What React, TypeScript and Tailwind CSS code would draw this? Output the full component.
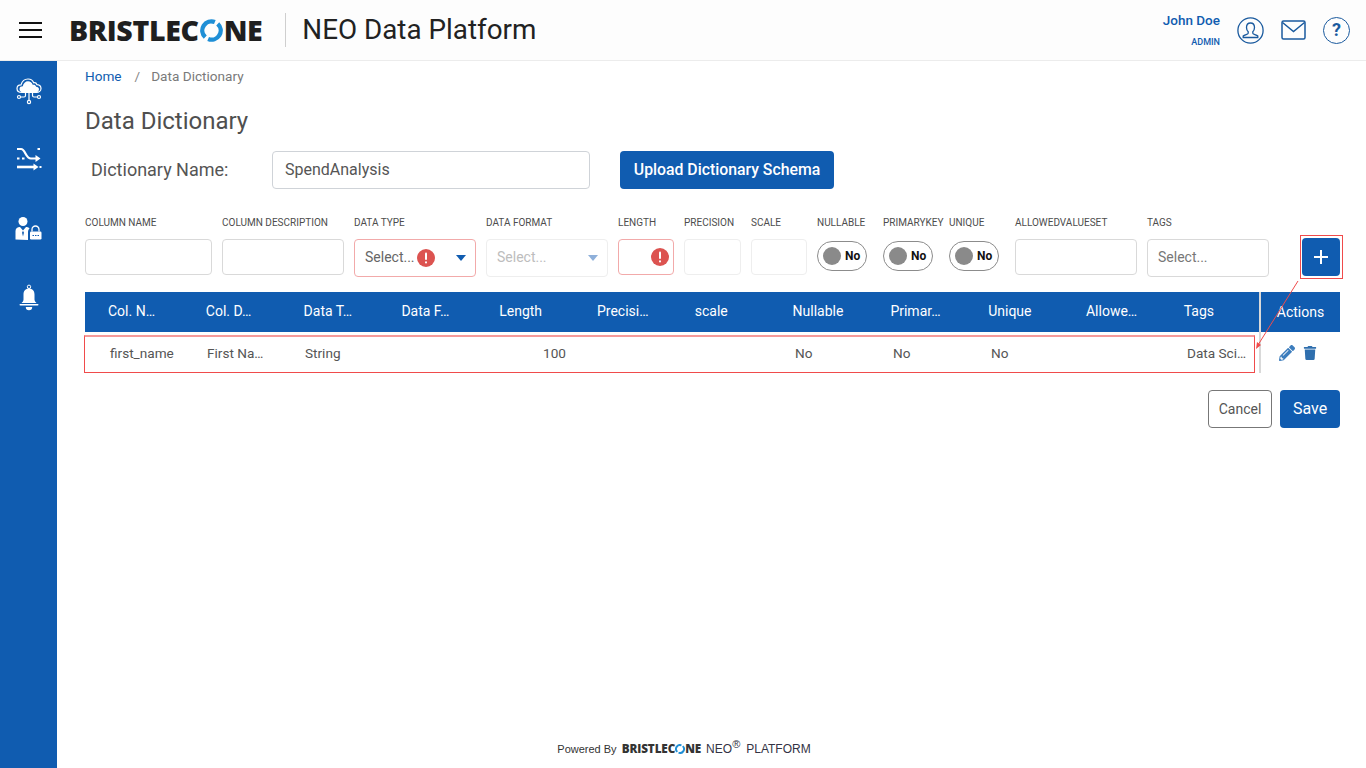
import { FaPencilAlt, FaTrash } from 'react-icons/fa';

const font = "font-['Roboto',sans-serif]";

const LogoRing = ({ size }: { size: number }) => (
  <svg width={size} height={size} viewBox="0 0 24 24" fill="none" className="shrink-0">
    <path d="M15.5 3.2A9.5 9.5 0 0 0 5.5 19" stroke="#1f8fd6" strokeWidth="4.6" />
    <path d="M8.5 20.8A9.5 9.5 0 0 0 18.5 5" stroke="#1f8fd6" strokeWidth="4.6" />
  </svg>
);

const Logo = () => (
  <div className="flex items-center font-['Open_Sans',sans-serif] font-extrabold text-[28.500px] leading-none text-[#1f1f1f] tracking-[-0.35px]">
    <span>BRISTLEC</span>
    <span className="mx-[1px]"><LogoRing size={23} /></span>
    <span>NE</span>
  </div>
);

const SmallLogo = () => (
  <div className="flex items-center font-['Open_Sans',sans-serif] font-extrabold text-[11.700px] leading-none text-[#333] tracking-[-0.1px]">
    <span>BRISTLEC</span>
    <LogoRing size={10} />
    <span>NE</span>
  </div>
);

const CloudIcon = () => (
  <svg width="28" height="28" viewBox="0 0 28 28" fill="none" stroke="white" strokeWidth="1.2" className="shrink-0">
    <path d="M7 15.5c-3 0-5-1.700-5-4s1.700-3.700 4-3.700C7 4.500 9.500 2 13 2c2.700 0 4.800 1.500 5.700 3.800 1-.3 2.600.1 3.300 1.900 2.300.2 4 1.800 4 3.900s-2 3.900-4.500 3.900z" />
    <path d="M8.500 15.500c-2.500 0-4-1.500-4-3.500s1.500-2.700 3.300-2.700c.5-3 2.700-5 5.200-5 2.300 0 4 1.500 4.700 3.500 1-.4 3-.2 3.500 2 1.500 0 2.800.9 2.800 2.500s-1.500 3.200-3 3.200z" fill="white" stroke="none" />
    <path d="M14 15v8M10.500 15v3.500a1.500 1.500 0 0 1-1.500 1.500H5.500M17.500 15v3.500a1.500 1.500 0 0 0 1.500 1.500h3.500" />
    <circle cx="14" cy="25" r="1.600" /><circle cx="4" cy="20" r="1.500" /><circle cx="24" cy="20" r="1.500" />
  </svg>
);

const FlowIcon = () => (
  <svg width="26" height="26" viewBox="0 0 26 26" fill="none" stroke="white" strokeWidth="2.200" className="shrink-0">
    <path d="M1 3h4c4.500 0 4.500 9.500 10 9.500h6" />
    <path d="M19.500 9l5 3.500-5 3.500z" fill="white" stroke="none" />
    <path d="M1 21h18" strokeWidth="2.600" />
    <path d="M17.500 17.500l5 3.500-5 3.500z" fill="white" stroke="none" />
    <path d="M1 12.500h2.500M6 12.500h2.500M21.500 3h2.500M23.500 21h2" />
  </svg>
);

const AdminIcon = () => (
  <svg width="28" height="26" viewBox="0 0 28 26" fill="white" className="shrink-0">
    <circle cx="8" cy="5.500" r="4.500" />
    <path d="M0.500 23.500v-8.500c0-2.500 2-4 4.500-4l3 3.500 3-3.500c1.500 0 3 .5 3.500 1.500-1 .7-1.500 2-1.500 3.500v8z" />
    <path d="M8 15l-1 1.500 1 4 1-4z" fill="#105cb0" />
    <path d="M17 15.500v-2a3.500 3.500 0 0 1 7 0v2" fill="none" stroke="white" strokeWidth="1.300" />
    <rect x="15" y="15.500" width="11.500" height="8" rx="1.200" />
    <path d="M17.500 19.500h6.500" stroke="#105cb0" strokeWidth="1.200" strokeDasharray="1.500 1" />
  </svg>
);

const BellIcon = () => (
  <svg width="20" height="28" viewBox="0 0 20 28" fill="white" className="shrink-0">
    <circle cx="10" cy="2.800" r="1.700" fill="none" stroke="white" strokeWidth="1" />
    <path d="M10 4.500c3.500 0 5.500 2.500 5.500 6v5c0 1.500 1 2.500 2 3.500H2.500c1-1 2-2 2-3.500v-5c0-3.500 2-6 5.500-6z" />
    <rect x="0.500" y="20" width="19" height="1.600" rx=".8" />
    <path d="M6.800 23h6.400a3.200 3.200 0 0 1-6.400 0z" />
  </svg>
);

const UserIcon = () => (
  <svg width="27" height="27" viewBox="0 0 27 27" fill="none" stroke="#1a5a9e" strokeWidth="1.300" className="shrink-0">
    <circle cx="13.500" cy="13.500" r="12.600" />
    <path d="M13.500 6c-2.700 0-4 2-4 4.500 0 1.800.7 3.300 1.700 4.300v1.500c0 1-3.700 1.300-5 2.700V20.500h14.600v-1.500c-1.300-1.400-5-1.700-5-2.700v-1.500c1-1 1.700-2.500 1.700-4.300 0-2.500-1.300-4.500-4-4.500z" />
  </svg>
);

const MailIcon = () => (
  <svg width="25" height="20" viewBox="0 0 25 20" fill="none" stroke="#1a5a9e" strokeWidth="1.500" className="shrink-0">
    <rect x="1" y="1" width="23" height="18" rx="1.500" />
    <path d="M1.500 2.500L12.500 11.500l11-9" />
  </svg>
);

const HelpIcon = () => (
  <div className={`w-[27px] h-[27px] rounded-full border-[1.3px] border-[#1a5a9e] flex items-center justify-center text-[#1a5a9e] font-bold text-[18px] leading-none ${font}`}>?</div>
);

const Alert = ({ size = 18 }: { size?: number }) => (
  <svg width={size} height={size} viewBox="0 0 18 18" className="shrink-0">
    <circle cx="9" cy="9" r="9" fill="#dc5350" />
    <rect x="8" y="3.500" width="2" height="7.500" rx="1" fill="white" />
    <rect x="8" y="12.300" width="2" height="2.200" rx="1" fill="white" />
  </svg>
);

const Label = ({ children }: { children: string }) => (
  <div className="text-[10px] leading-[13px] text-[#4d4d4d] whitespace-nowrap mb-[10px]">{children}</div>
);

const TextBox = ({ className = 'border-[#d9d9d9]', children }: { className?: string; children?: React.ReactNode }) => (
  <div className={`h-[36px] bg-white border rounded-[4px] flex items-center ${className}`}>{children}</div>
);

const Toggle = () => (
  <div className="h-[30px] w-[50px] mt-[12px] rounded-full border border-[#8c8c8c] bg-white flex items-center pl-[5px] gap-[4px]">
    <span className="w-[18px] h-[18px] rounded-full bg-[#8a8a8a]" />
    <span className="text-[12px] font-bold text-[#111]">No</span>
  </div>
);

const headers = ['Col. N…', 'Col. D…', 'Data T…', 'Data F…', 'Length', 'Precisi…', 'scale', 'Nullable', 'Primar…', 'Unique', 'Allowe…', 'Tags'];

const Caret = ({ color }: { color: string }) => (
  <span className={`w-0 h-0 border-x-[5px] border-x-transparent border-t-[6px] ${color}`} />
);

export default function App() {
  return (
    <div className={`h-screen flex flex-col bg-white overflow-hidden ${font}`}>
      <header className="h-[61px] shrink-0 bg-[#fdfdfd] border-b border-[#ececec] flex items-center pl-[19px] pr-[16px]">
        <div className="w-[23px] flex flex-col gap-[5px] mr-[27px]">
          <span className="h-[2px] bg-[#111]" />
          <span className="h-[2px] bg-[#111]" />
          <span className="h-[2px] bg-[#111]" />
        </div>
        <Logo />
        <div className="w-px h-[34px] bg-[#cfcfcf] ml-[23px] mr-[16px]" />
        <div className="text-[27.800px] text-[#222]">NEO Data Platform</div>
        <div className="ml-auto flex items-center">
          <div className="text-right mr-[17px] text-[#105cb0]">
            <div className="text-[13.500px] font-medium leading-[16px]">John Doe</div>
            <div className="text-[9px] font-medium mt-[8px] leading-[12px]">ADMIN</div>
          </div>
          <UserIcon />
          <div className="mx-[17px]"><MailIcon /></div>
          <HelpIcon />
        </div>
      </header>

      <div className="flex-1 flex min-h-0">
        <aside className="w-[57px] shrink-0 bg-[#105cb0] flex flex-col items-center pt-[16px]">
          <CloudIcon />
          <div className="mt-[41px]"><FlowIcon /></div>
          <div className="mt-[44px]"><AdminIcon /></div>
          <div className="mt-[42px]"><BellIcon /></div>
        </aside>

        <main className="flex-1 min-w-0 flex flex-col pl-[28px] pr-[26px] relative">
          <div className="flex items-center text-[13.600px] mt-[6px] leading-[18px]">
            <span className="text-[#105cb0]">Home</span>
            <span className="text-[#888] ml-[13px] mr-[11px]">/</span>
            <span className="text-[#7a7a7a]">Data Dictionary</span>
          </div>
          <h1 className="text-[24px] text-[#4f4f4f] mt-[20px] leading-[32px]">Data Dictionary</h1>

          <div className="flex items-center mt-[14px] h-[38px]">
            <div className="w-[187px] pl-[6px] pb-[1px] text-[18px] text-[#555]">Dictionary Name:</div>
            <div className="w-[318px] h-[38px] bg-white border border-[#cfd3d8] rounded-[4px] flex items-center pl-[12px] text-[16px] text-[#555]">SpendAnalysis</div>
            <div className="ml-[30px] w-[214px] h-[38px] bg-[#105cb0] rounded-[4px] flex items-center justify-center text-white text-[15.800px] font-medium">Upload Dictionary Schema</div>
          </div>

          <div className="flex items-start mt-[27px] h-[76px]">
            <div className="w-[127px] mr-[10px]"><Label>COLUMN NAME</Label><TextBox /></div>
            <div className="w-[122px] mr-[10px]"><Label>COLUMN DESCRIPTION</Label><TextBox /></div>
            <div className="w-[122px] mr-[10px]">
              <Label>DATA TYPE</Label>
              <TextBox className="h-[38px] border-[#f2aaaa] pl-[10px] pr-[9px] pb-[1px] text-[14px] text-[#666]">
                <span>Select...</span>
                <span className="ml-[2px]"><Alert /></span>
                <span className="ml-auto flex"><Caret color="border-t-[#105cb0]" /></span>
              </TextBox>
            </div>
            <div className="w-[122px] mr-[10px]">
              <Label>DATA FORMAT</Label>
              <TextBox className="h-[38px] border-[#eeeeee] pl-[10px] pr-[9px] pb-[1px] text-[14px] text-[#bdbdbd]">
                <span>Select...</span>
                <span className="ml-auto flex"><Caret color="border-t-[#8fb0da]" /></span>
              </TextBox>
            </div>
            <div className="w-[56px] mr-[10px]">
              <Label>LENGTH</Label>
              <TextBox className="border-[#f2aaaa] justify-end pr-[4px]"><Alert /></TextBox>
            </div>
            <div className="w-[57px] mr-[10px]"><Label>PRECISION</Label><TextBox className="border-[#eeeeee]" /></div>
            <div className="w-[56px] mr-[10px]"><Label>SCALE</Label><TextBox className="border-[#eeeeee]" /></div>
            <div className="w-[50px] mr-[16px]"><Label>NULLABLE</Label><Toggle /></div>
            <div className="w-[50px] mr-[16px]"><Label>PRIMARYKEY</Label><Toggle /></div>
            <div className="w-[50px] mr-[16px]"><Label>UNIQUE</Label><Toggle /></div>
            <div className="w-[122px] mr-[10px]"><Label>ALLOWEDVALUESET</Label><TextBox /></div>
            <div className="w-[122px]">
              <Label>TAGS</Label>
              <TextBox className="h-[38px] border-[#d9d9d9] pl-[10px] pb-[1px] text-[14px] text-[#777]">Select...</TextBox>
            </div>
            <div className="ml-auto mt-[19px] pt-[2px] pb-[2px] pl-[1px] pr-[2px] -mr-[3px] border border-[#f04b4b] flex">
              <div className="w-[38px] h-[38px] bg-[#105cb0] rounded-[4px] flex items-center justify-center">
                <svg width="16" height="16" viewBox="0 0 16 16"><path d="M8 1v14M1 8h14" stroke="white" strokeWidth="2" /></svg>
              </div>
            </div>
          </div>

          <div className="flex h-[40px]">
            <div className="w-[1174px] shrink-0 bg-[#105cb0] flex pl-[23px] pb-[2px] text-white text-[14px] items-center">
              {headers.map((h) => (
                <div key={h} className="w-[97.800px] shrink-0 whitespace-nowrap">{h}</div>
              ))}
            </div>
            <div className="w-[2px] bg-[#d9d9d9]" />
            <div className="w-[79px] bg-[#105cb0] text-white text-[14px] flex items-center justify-center pt-[1px]">Actions</div>
          </div>

          <div className="flex h-[43px]">
            <div className="w-[1171px] -ml-px mt-[3px] h-[38px] pb-[3px] border border-[#f04b4b] border-t-[#f59a9a] border-t-2 flex items-center text-[13.600px] text-[#555]">
              <div className="w-[122px] pl-[25px] shrink-0">first_name</div>
              <div className="w-[98px] shrink-0">First Na…</div>
              <div className="w-[196px] shrink-0">String</div>
              <div className="w-[65px] shrink-0 text-right">100</div>
              <div className="w-[229px] shrink-0" />
              <div className="w-[98px] shrink-0">No</div>
              <div className="w-[98px] shrink-0">No</div>
              <div className="w-[196px] shrink-0">No</div>
              <div className="shrink-0">Data Sci…</div>
            </div>
            <div className="w-[2px] ml-[4px] h-[41px] bg-[#d9d9d9]" />
            <div className="flex items-center pl-[18px] gap-[8px] text-[#3d7dbd] pb-[2px]">
              <FaPencilAlt size={16} />
              <FaTrash size={14} className="text-[#2f6fae]" />
            </div>
          </div>

          <div className="flex justify-end gap-[8px] mt-[15px]">
            <div className="w-[64px] h-[38px] bg-white border border-[#777] rounded-[4px] flex items-center justify-center text-[14px] text-[#555]">Cancel</div>
            <div className="w-[60px] h-[38px] bg-[#105cb0] rounded-[4px] flex items-center justify-center text-[16px] text-white">Save</div>
          </div>

          <footer className="mt-auto mb-[10px] flex items-center justify-center pr-[57px] font-['Liberation_Sans',sans-serif] text-[#333]">
            <span className="text-[11px] mr-[5px]">Powered By</span>
            <SmallLogo />
            <span className="text-[12px] ml-[5px] text-[#334]">NEO<sup className="text-[11px]">®</sup></span>
            <span className="text-[12px] ml-[6px] text-[#334]">PLATFORM</span>
          </footer>

          <svg width="60" height="80" viewBox="0 0 60 80" fill="none" className="absolute left-[1195px] top-[218px] pointer-events-none">
            <path d="M46 2L6 66" stroke="#f04b4b" strokeWidth="1" />
            <path d="M4 70l1-7 4 3z" fill="#f04b4b" />
          </svg>
        </main>
      </div>
    </div>
  );
}
